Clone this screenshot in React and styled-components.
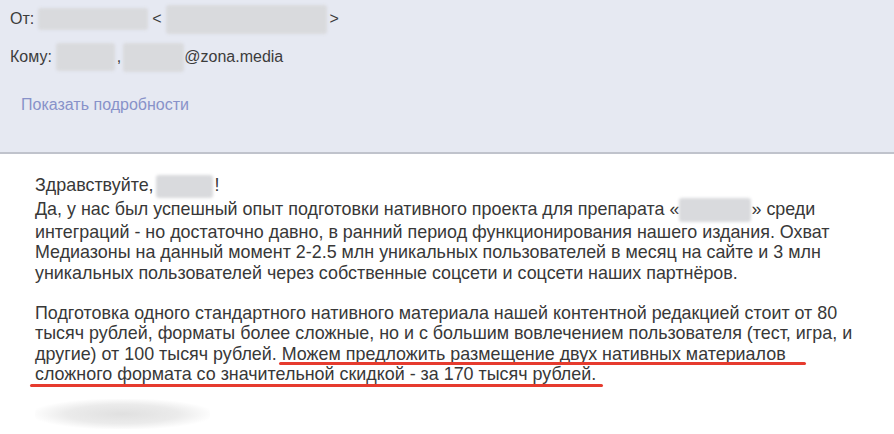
import React from "react";
import styled, { createGlobalStyle } from "styled-components";

const GlobalStyle = createGlobalStyle`
  html, body {
    margin: 0;
    padding: 0;
    background: #ffffff;
  }
  body {
    font-family: "Liberation Sans", Arial, sans-serif;
    color: #333333;
  }
`;

const Page = styled.div`
  width: 894px;
  height: 434px;
  overflow: hidden;
  background: #ffffff;
`;

const Header = styled.header`
  height: 154px;
  box-sizing: border-box;
  padding: 6px 10px 0;
  background: #e6e9f2;
  border-bottom: 2px solid #c0c3cc;
`;

const MetaRow = styled.div`
  display: flex;
  align-items: center;
  height: 26px;
  margin-bottom: ${({ $gap }) => $gap || 0}px;
  font-size: 16px;
  color: #3c3c3c;
  white-space: nowrap;
`;

const Label = styled.span`
  margin-right: 4px;
`;

const Sep = styled.span`
  margin: 0 ${({ $mx }) => $mx || 0}px;
`;

const Redacted = styled.span`
  display: inline-block;
  width: ${({ $w }) => $w}px;
  height: ${({ $h }) => $h || 24}px;
  margin: 0 ${({ $mx }) => ($mx === undefined ? 3 : $mx)}px;
  vertical-align: middle;
  background: #d9dadd;
  border-radius: 3px;
  filter: blur(1.5px);
`;

const DetailsLink = styled.a`
  display: inline-block;
  margin: 26px 0 0 11px;
  font-size: 16px;
  color: #8892c9;
  text-decoration: none;
  cursor: pointer;
`;

const Body = styled.main`
  padding: 21px 0 0 35px;
  font-size: 17.9px;
  line-height: 20.3px;
  color: #383838;
`;

const Paragraph = styled.p`
  margin: 0 0 20.3px;
  white-space: nowrap;
`;

const Mark = styled.span`
  position: relative;

  &::after {
    content: "";
    position: absolute;
    left: ${({ $left }) => -$left}px;
    right: ${({ $right }) => -$right}px;
    bottom: ${({ $drop }) => -$drop}px;
    height: 3px;
    border-radius: 2px;
    background: #e63b2e;
  }
`;

const Signature = styled.div`
  width: 175px;
  height: 30px;
  margin-top: -6px;
  border-radius: 15px;
  background: radial-gradient(ellipse at center, #e0e0e0 0%, #ebebeb 45%, rgba(255, 255, 255, 0) 75%);
`;

export default function App() {
  return (
    <Page>
      <GlobalStyle />
      <Header>
        <MetaRow $gap={12}>
          <Label>От:</Label>
          <Redacted $w={110} $h={22} $mx={0} />
          <Sep $mx={4}>&lt;</Sep>
          <Redacted $w={161} $h={29} $mx={0} />
          <Sep $mx={3}>&gt;</Sep>
        </MetaRow>
        <MetaRow>
          <Label>Кому:</Label>
          <Redacted $w={59} $h={28} $mx={0} />
          <Sep $mx={2}>,</Sep>
          <Redacted $w={61} $h={29} $mx={0} />
          <span>@zona.media</span>
        </MetaRow>
        <DetailsLink>Показать подробности</DetailsLink>
      </Header>
      <Body>
        <Paragraph>
          Здравствуйте,<Redacted $w={57} $h={23} $mx={2} />!
          <br />
          Да, у нас был успешный опыт подготовки нативного проекта для препарата «
          <Redacted $w={72} $h={24} $mx={0} />» среди
          <br />
          интеграций - но достаточно давно, в ранний период функционирования нашего издания. Охват
          <br />
          Медиазоны на данный момент 2-2.5 млн уникальных пользователей в месяц на сайте и 3 млн
          <br />
          уникальных пользователей через собственные соцсети и соцсети наших партнёров.
        </Paragraph>
        <Paragraph>
          Подготовка одного стандартного нативного материала нашей контентной редакцией стоит от 80
          <br />
          тысяч рублей, форматы более сложные, но и с большим вовлечением пользователя (тест, игра, и
          <br />
          другие) от 100 тысяч рублей.{" "}
          <Mark $left={3} $right={20} $drop={1.5}>
            Можем предложить размещение двух нативных материалов
          </Mark>
          <br />
          <Mark $left={5} $right={7} $drop={2.5}>
            сложного формата со значительной скидкой - за 170 тысяч рублей.
          </Mark>
        </Paragraph>
        <Signature />
      </Body>
    </Page>
  );
}
